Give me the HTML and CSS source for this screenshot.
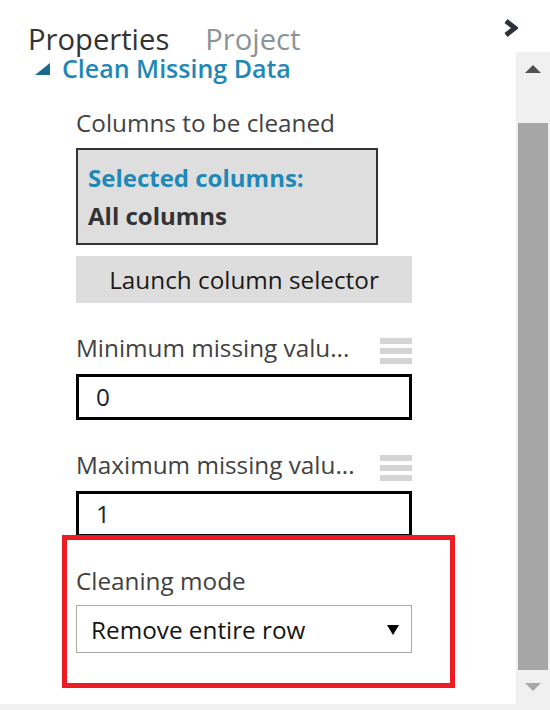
FILE: index.html
```html
<!DOCTYPE html>
<html lang="en">
<head>
<meta charset="utf-8">
<title>Properties</title>
<link rel="stylesheet" href="styles.css">
</head>
<body>
<div class="app">
  <header class="tabs">
    <span class="tab tab-active">Properties</span>
    <span class="tab">Project</span>
    <svg class="collapse" width="15" height="20" viewBox="0 0 15 20" aria-hidden="true">
      <polyline points="3,3 12,10 3,17" fill="none" stroke="#2d3238" stroke-width="5" stroke-linejoin="miter"/>
    </svg>
  </header>
  <div class="main">
    <div class="panel">
      <div class="module-title">
        <svg class="expander" width="15" height="12" viewBox="0 0 15 12" aria-hidden="true"><polygon points="0,12 15,12 15,0" fill="#1b6a8f"/></svg>
        <span>Clean Missing Data</span>
      </div>

      <div class="field field-first">
        <div class="label">Columns to be cleaned</div>
        <div class="selected-box">
          <div class="sel-head">Selected columns:</div>
          <div class="sel-value">All columns</div>
        </div>
        <div class="launch">Launch column selector</div>
      </div>

      <div class="field">
        <div class="label-row">
          <span class="label">Minimum missing valu...</span>
          <span class="param-icon"><i></i><i></i><i></i></span>
        </div>
        <div class="input">0</div>
      </div>

      <div class="field">
        <div class="label-row">
          <span class="label">Maximum missing valu...</span>
          <span class="param-icon"><i></i><i></i><i></i></span>
        </div>
        <div class="input">1</div>
      </div>

      <div class="field field-mode">
        <div class="label">Cleaning mode</div>
        <div class="select">Remove entire row<span class="caret"></span></div>
        <div class="highlight"></div>
      </div>
    </div>
    <div class="scrollbar">
      <div class="sb-btn"><span class="arrow-up"></span></div>
      <div class="sb-track"><div class="sb-thumb"></div></div>
      <div class="sb-btn"><span class="arrow-down"></span></div>
    </div>
  </div>
  <div class="statusbar"></div>
</div>
</body>
</html>
```
FILE: styles.css
```css
html, body {
  margin: 0;
  padding: 0;
  background: #ffffff;
}
.app {
  width: 550px;
  height: 710px;
  display: flex;
  flex-direction: column;
  font-family: "Open Sans", "Noto Sans", sans-serif;
  color: #3c3c3c;
  overflow: hidden;
}
.tabs {
  height: 52px;
  flex: none;
  display: flex;
  align-items: flex-start;
  padding-left: 28px;
  box-sizing: border-box;
}
.tab {
  font-size: 29.2px;
  line-height: 26px;
  margin-top: 26px;
  color: #8d9399;
  margin-right: 36px;
  white-space: nowrap;
}
.tab-active {
  color: #333333;
}
.collapse {
  margin-left: auto;
  margin-right: 32px;
  margin-top: 18px;
}
.main {
  flex: 1;
  display: flex;
  min-height: 0;
}
.panel {
  flex: 1;
  position: relative;
}
.module-title {
  display: flex;
  align-items: center;
  margin-top: 2px;
  height: 28px;
  padding-left: 35px;
  font-size: 25px;
  font-weight: 600;
  color: #1f88b6;
  line-height: 28px;
}
.expander {
  margin-right: 12px;
  margin-top: 2px;
}
.field {
  width: 336px;
  margin-left: 76px;
  margin-top: 29px;
  position: relative;
}
.field-first {
  margin-top: 25px;
}
.label {
  font-size: 24.3px;
  line-height: 32px;
  height: 32px;
  color: #424242;
  white-space: nowrap;
}
.label-row {
  display: flex;
  justify-content: space-between;
}
.param-icon {
  display: flex;
  flex-direction: column;
  gap: 4px;
  width: 32px;
  margin-top: 6px;
}
.param-icon i {
  display: block;
  height: 6px;
  background: #d4d4d4;
}
.selected-box {
  width: 302px;
  box-sizing: border-box;
  margin-top: 9px;
  border: 2px solid #333333;
  background: #dedede;
  padding: 9px 10px 8px;
  font-weight: 700;
  font-size: 24px;
  line-height: 38px;
}
.sel-head {
  color: #1f88b6;
}
.sel-value {
  color: #333333;
}
.launch {
  margin-top: 11px;
  height: 47px;
  background: #dddddd;
  color: #1a1a1a;
  font-size: 24.3px;
  line-height: 47px;
  text-align: center;
}
.input {
  margin-top: 10px;
  height: 46px;
  box-sizing: border-box;
  border: 3px solid #000000;
  padding-left: 17px;
  font-size: 24.3px;
  line-height: 39px;
  color: #222222;
}
.field-mode {
  margin-top: 28px;
}
.select {
  margin-top: 8px;
  height: 48px;
  box-sizing: border-box;
  border: 1px solid #aaaaaa;
  padding-left: 14px;
  padding-top: 1px;
  font-size: 24.3px;
  line-height: 45px;
  color: #141414;
  display: flex;
  align-items: center;
}
.caret {
  margin-left: auto;
  margin-right: 12px;
  width: 0;
  height: 0;
  border-left: 6px solid transparent;
  border-right: 6px solid transparent;
  border-top: 10px solid #000000;
}
.highlight {
  position: absolute;
  left: -14px;
  top: -30px;
  width: 393px;
  height: 153px;
  box-sizing: border-box;
  border: 5px solid #ed1c24;
  pointer-events: none;
}
.scrollbar {
  width: 34px;
  flex: none;
  background: #f0f0f0;
  display: flex;
  flex-direction: column;
}
.sb-btn {
  height: 34px;
  display: flex;
  align-items: center;
  justify-content: center;
}
.arrow-up {
  width: 0;
  height: 0;
  border-left: 8px solid transparent;
  border-right: 8px solid transparent;
  border-bottom: 8px solid #505050;
}
.arrow-down {
  width: 0;
  height: 0;
  border-left: 8px solid transparent;
  border-right: 8px solid transparent;
  border-top: 8px solid #a8a8a8;
}
.sb-track {
  flex: 1;
  display: flex;
  flex-direction: column;
  justify-content: flex-end;
  padding: 0 2px;
}
.sb-thumb {
  height: 547px;
  background: #a6a6a6;
}
.statusbar {
  height: 6px;
  flex: none;
  background: #f0f0f0;
}
```
